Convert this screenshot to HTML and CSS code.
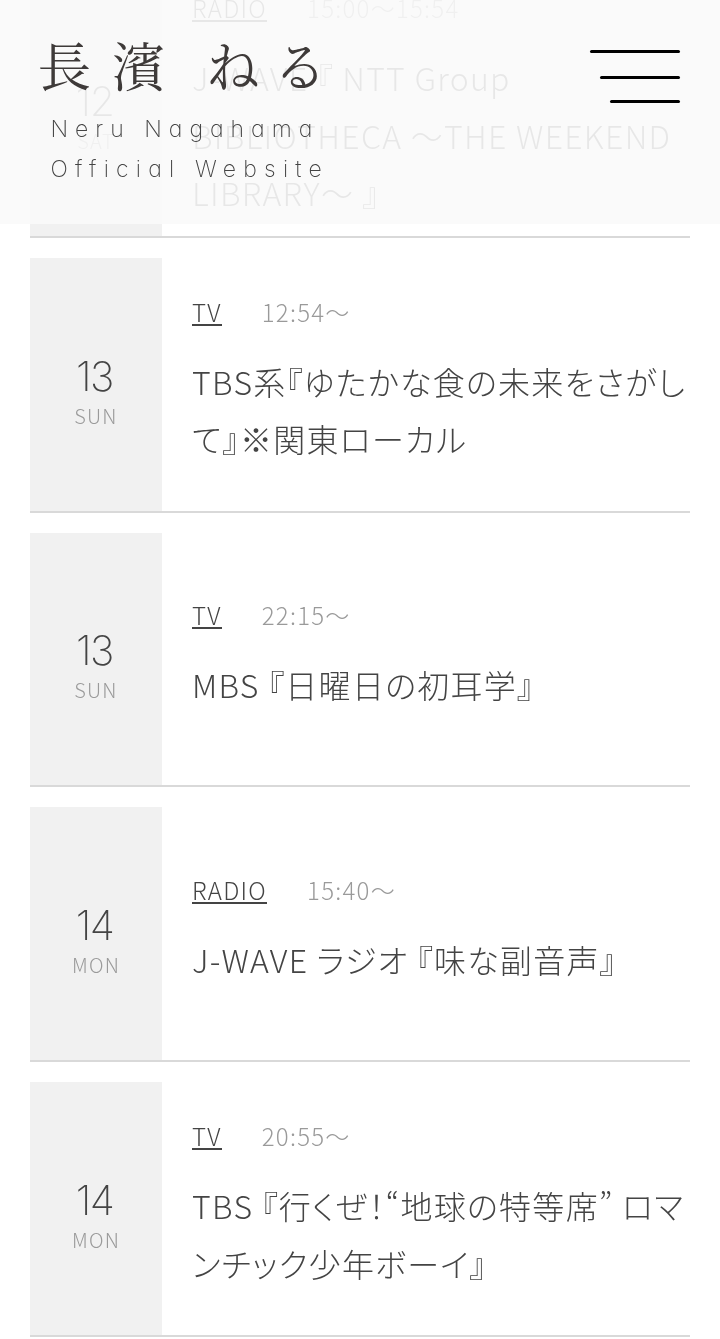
FILE: index.html
```html
<!DOCTYPE html>
<html lang="ja">
<head>
<meta charset="utf-8">
<title>長濱 ねる Official Website</title>
<link rel="stylesheet" href="styles.css">
</head>
<body>
<header class="header">
  <div class="brand">
    <h1 class="logo">長濱 <span class="kana">ね</span>る</h1>
    <p class="sub sub-name">Neru Nagahama</p>
    <p class="sub sub-site">Official Website</p>
  </div>
  <div class="menu"><span class="bar bar-long"></span><span class="bar bar-mid"></span><span class="bar bar-short"></span></div>
</header>
<main class="list">
  <article class="item">
    <div class="date"><span class="num">12</span><span class="day">SAT</span></div>
    <div class="body"><div class="meta"><span class="tag">RADIO</span><span class="time">15:00〜15:54</span></div>
    <p class="title">J-WAVE 『 NTT Group<br>BIBLIOTHECA 〜THE WEEKEND<br>LIBRARY〜 』</p></div>
  </article>
  <article class="item">
    <div class="date"><span class="num">13</span><span class="day">SUN</span></div>
    <div class="body"><div class="meta"><span class="tag">TV</span><span class="time">12:54〜</span></div>
    <p class="title">TBS系『ゆたかな食の未来をさがし<br>て』※関東ローカル</p></div>
  </article>
  <article class="item">
    <div class="date"><span class="num">13</span><span class="day">SUN</span></div>
    <div class="body"><div class="meta"><span class="tag">TV</span><span class="time">22:15〜</span></div>
    <p class="title">MBS 『日曜日の初耳学』</p></div>
  </article>
  <article class="item">
    <div class="date"><span class="num">14</span><span class="day">MON</span></div>
    <div class="body"><div class="meta"><span class="tag">RADIO</span><span class="time">15:40〜</span></div>
    <p class="title">J-WAVE ラジオ 『味な副音声』</p></div>
  </article>
  <article class="item">
    <div class="date"><span class="num">14</span><span class="day">MON</span></div>
    <div class="body"><div class="meta"><span class="tag">TV</span><span class="time">20:55〜</span></div>
    <p class="title">TBS 『行くぜ！“地球の特等席” ロマ<br>ンチック少年ボーイ』</p></div>
  </article>
</main>
</body>
</html>
```
FILE: styles.css
```css
* { box-sizing: border-box; margin: 0; padding: 0; }
html, body { height: 1339px; overflow: hidden; }
body {
  background: #fff;
  color: #444;
  font-family: "Noto Sans CJK JP", sans-serif;
  font-weight: 300;
  font-feature-settings: "palt";
}
.header {
  position: fixed;
  z-index: 2;
  top: 0; left: 0; right: 0;
  height: 224px;
  padding: 34px 40px 0 38px;
  display: flex;
  justify-content: space-between;
  background: rgba(250, 250, 250, .9);
  will-change: transform;
}
.brand { white-space: nowrap; }
.logo {
  font-family: "Noto Serif CJK JP", "Noto Sans CJK JP", serif;
  font-feature-settings: normal;
  font-weight: 400;
  font-size: 53px;
  line-height: 60px;
  letter-spacing: 21px;
  word-spacing: -14px;
  color: #3e3a39;
}
.kana { letter-spacing: 14px; }
.sub {
  padding-left: 12.5px;
  font-family: Inter, sans-serif;
  font-feature-settings: "cv11";
  font-weight: 200;
  font-size: 23px;
  line-height: 40px;
}
.sub-name { margin-top: 15px; letter-spacing: 7px; }
.sub-site { letter-spacing: 7.2px; }
.menu { display: flex; flex-direction: column; align-items: flex-end; width: 90px; padding-top: 16px; }
.bar { height: 3px; border-radius: 1.5px; background: #000; }
.bar-long { width: 90px; }
.bar-mid { width: 80px; margin-top: 23px; }
.bar-short { width: 70px; margin-top: 21px; }
.list { margin: -17.2px 30px 0; display: flex; flex-direction: column; gap: 20px; will-change: transform; }
.item { display: flex; flex: none; height: 254.8px; border-bottom: 2px solid #d9d9d9; }
.date {
  flex: none;
  width: 132px;
  padding-top: 21px;
  background: #f1f1f1;
  display: flex;
  flex-direction: column;
  align-items: center;
  justify-content: center;
}
.num { margin-right: 3px; font-family: Inter, sans-serif; font-weight: 200; font-size: 41px; line-height: 42px; letter-spacing: -1.5px; }
.day { font-size: 20px; line-height: 38px; letter-spacing: 1.2px; color: #9a9a9a; }
.body { flex: 1; padding-left: 30px; display: flex; flex-direction: column; justify-content: center; white-space: nowrap; }
.meta { display: flex; gap: 40px; font-size: 24px; line-height: 24px; letter-spacing: 1.25px; }
.tag { border-bottom: 2px solid #444; }
.time { color: #9a9a9a; }
.title { margin: 27px 0 .5px; font-size: 32px; line-height: 57.6px; letter-spacing: 1.28px; }
```
